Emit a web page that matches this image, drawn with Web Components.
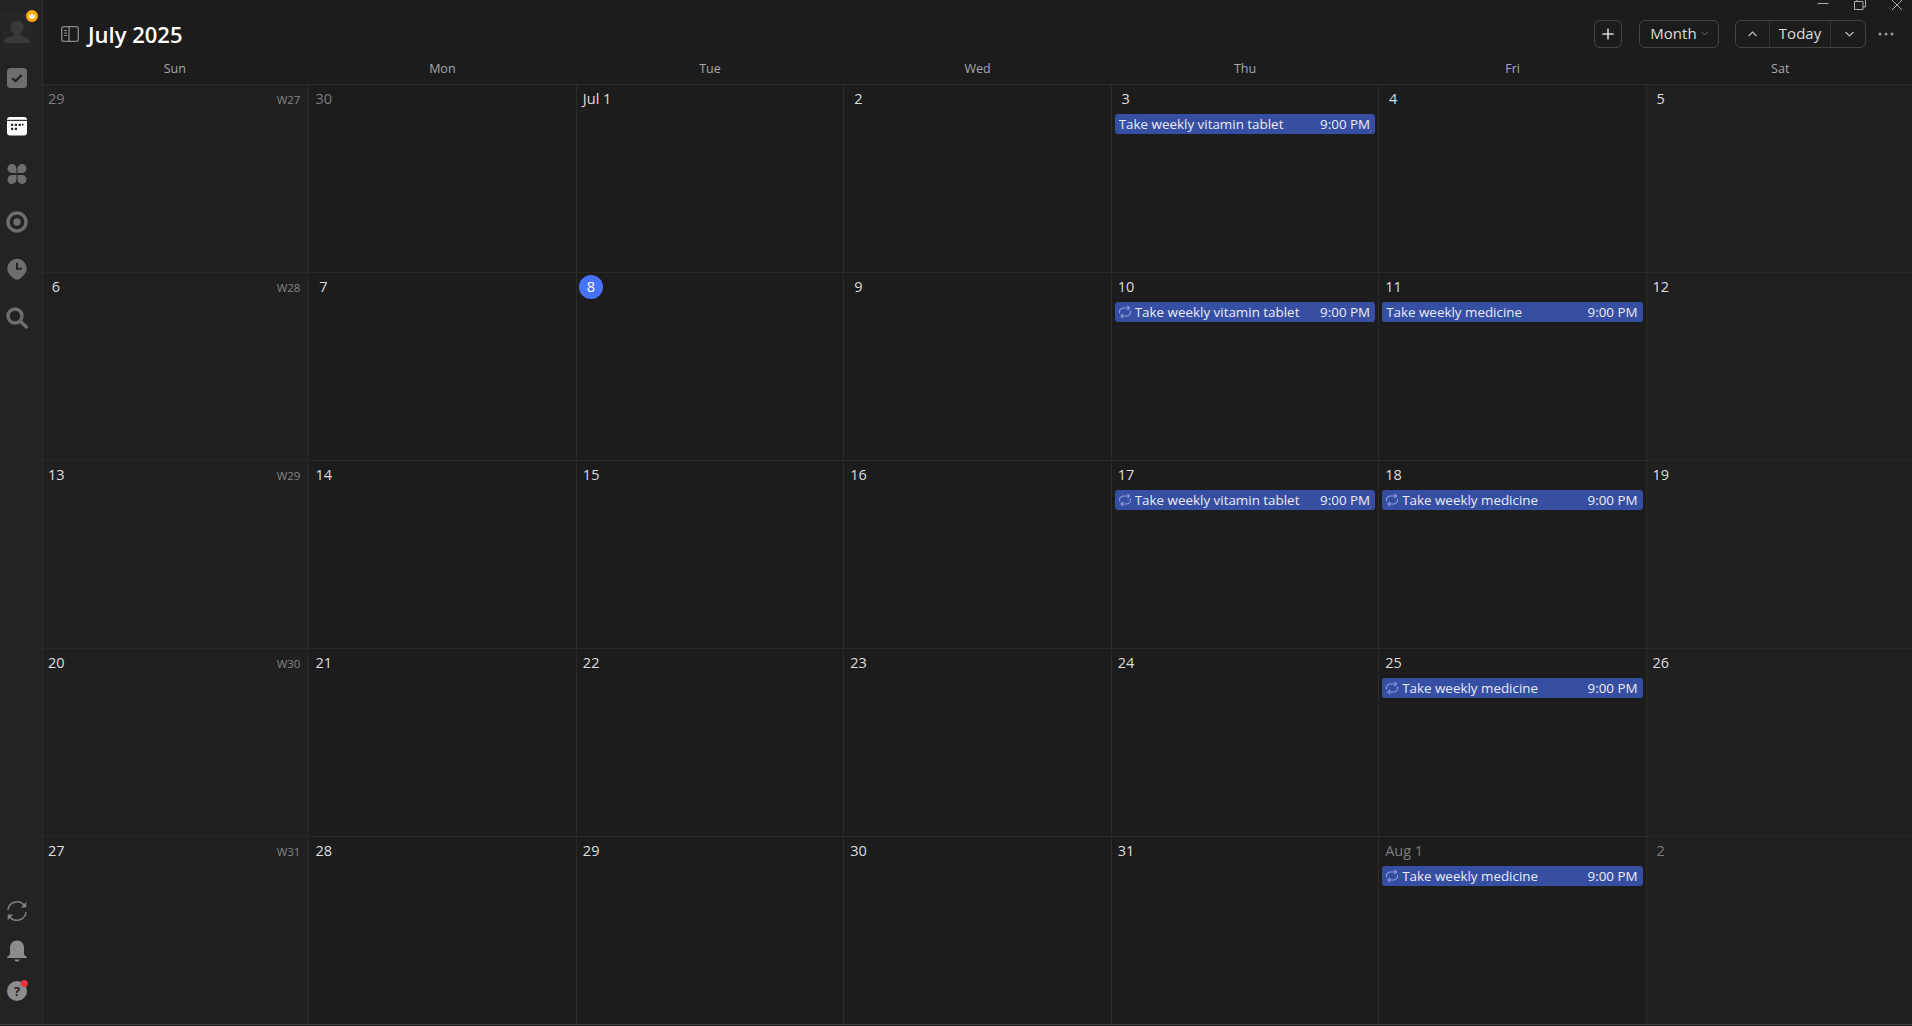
<!doctype html>
<html lang="en">
<head>
<meta charset="utf-8">
<title>Calendar</title>
<style>
  html, body { margin: 0; height: 100%; background: #1c1c1c; overflow: hidden; }
  body { font-family: "Open Sans", "Noto Sans", sans-serif; }
</style>
</head>
<body>
<cal-app>
  <side-bar slot="side">
    <nav-icon slot="top" size="48" name="check"></nav-icon>
    <nav-icon slot="top" size="48" name="calendar"></nav-icon>
    <nav-icon slot="top" size="48" name="grid"></nav-icon>
    <nav-icon slot="top" size="48" name="target"></nav-icon>
    <nav-icon slot="top" size="48" name="pin"></nav-icon>
    <nav-icon slot="top" size="48" name="search"></nav-icon>
    <nav-icon slot="bottom" size="40" name="sync"></nav-icon>
    <nav-icon slot="bottom" size="40" name="bell"></nav-icon>
    <nav-icon slot="bottom" size="40" name="help"></nav-icon>
  </side-bar>
  <cal-toolbar slot="main">July 2025</cal-toolbar>
  <month-grid slot="main">
    <day-cell date="29" muted week="W27"></day-cell>
    <day-cell date="30" muted></day-cell>
    <day-cell date="Jul 1"></day-cell>
    <day-cell date="2"></day-cell>
    <day-cell date="3"><cal-event time="9:00 PM">Take weekly vitamin tablet</cal-event></day-cell>
    <day-cell date="4"></day-cell>
    <day-cell date="5"></day-cell>

    <day-cell date="6" week="W28"></day-cell>
    <day-cell date="7"></day-cell>
    <day-cell date="8" today></day-cell>
    <day-cell date="9"></day-cell>
    <day-cell date="10"><cal-event time="9:00 PM" repeat>Take weekly vitamin tablet</cal-event></day-cell>
    <day-cell date="11"><cal-event time="9:00 PM">Take weekly medicine</cal-event></day-cell>
    <day-cell date="12"></day-cell>

    <day-cell date="13" week="W29"></day-cell>
    <day-cell date="14"></day-cell>
    <day-cell date="15"></day-cell>
    <day-cell date="16"></day-cell>
    <day-cell date="17"><cal-event time="9:00 PM" repeat>Take weekly vitamin tablet</cal-event></day-cell>
    <day-cell date="18"><cal-event time="9:00 PM" repeat>Take weekly medicine</cal-event></day-cell>
    <day-cell date="19"></day-cell>

    <day-cell date="20" week="W30"></day-cell>
    <day-cell date="21"></day-cell>
    <day-cell date="22"></day-cell>
    <day-cell date="23"></day-cell>
    <day-cell date="24"></day-cell>
    <day-cell date="25"><cal-event time="9:00 PM" repeat>Take weekly medicine</cal-event></day-cell>
    <day-cell date="26"></day-cell>

    <day-cell date="27" week="W31"></day-cell>
    <day-cell date="28"></day-cell>
    <day-cell date="29"></day-cell>
    <day-cell date="30"></day-cell>
    <day-cell date="31"></day-cell>
    <day-cell date="Aug 1" muted><cal-event time="9:00 PM" repeat>Take weekly medicine</cal-event></day-cell>
    <day-cell date="2" muted></day-cell>
  </month-grid>
</cal-app>

<script>
/* global HTMLElement, customElements */

const ICONS = {
  check: `<rect x="7" y="7" width="20" height="20" rx="3.5" fill="#6e6e6e"/>
    <path d="M12.200 17.200l3.300 3 6.200-6.200" fill="none" stroke="#232323" stroke-width="2.400"/>`,
  calendar: `<rect x="7" y="8" width="20" height="18.500" rx="3" fill="#fff"/>
    <rect x="7" y="10.800" width="20" height="1.100" fill="#232323"/>
    <path d="M11 14.700h2.200v2.200H11zM14.800 14.700H17v2.200h-2.200zM18.600 14.700h2.200v2.200h-2.200zM21.800 14.700H23.500v1.800h-1.700zM11 18.700h2.200v2.200H11zM14.800 18.700H17v2.200h-2.200z" fill="#232323"/>`,
  grid: `<path fill="#6e6e6e" d="M12 7a4.600 4.600 0 0 1 4.500 4.600v4.400h-4.500a4.500 4.500 0 0 1 0-9zM22 7a4.500 4.500 0 0 1 0 9h-4.500v-4.400A4.600 4.600 0 0 1 22 7zM12 27a4.500 4.500 0 0 1 0-9h4.500v4.400A4.600 4.600 0 0 1 12 27zM22 27a4.600 4.600 0 0 1-4.500-4.600V18H22a4.500 4.500 0 0 1 0 9z"/>`,
  target: `<circle cx="17" cy="17" r="9" fill="none" stroke="#6e6e6e" stroke-width="3.400"/>
    <circle cx="17" cy="17" r="3.700" fill="#6e6e6e"/>`,
  pin: `<path fill="#6e6e6e" d="M17 5.800a9.700 9.700 0 0 1 9.700 9.700c0 4.200-3.100 7.300-6.800 10.200-1.800 1.400-4 1.400-5.800 0-3.700-2.900-6.800-6-6.800-10.200A9.700 9.700 0 0 1 17 5.800z"/>
    <path d="M17 9.800v6h5" fill="none" stroke="#232323" stroke-width="2"/>`,
  search: `<circle cx="15" cy="15" r="7" fill="none" stroke="#6e6e6e" stroke-width="3.400"/>
    <path d="M20.500 20.500l6 5.400" fill="none" stroke="#6e6e6e" stroke-width="3.400" stroke-linecap="round"/>`,
  sync: `<path fill="none" stroke="#7f7f7f" stroke-width="1.500" d="M8 16a9.200 9.200 0 0 1 16-5.200l1.500 1.700M26 18a9.200 9.200 0 0 1-16 5.200l-1.500-1.700"/>
    <path fill="#7f7f7f" d="M26.300 7.800v5.700h-5.500zM7.700 26.200v-5.700h5.500z"/>`,
  bell: `<path fill="#8c8c8c" d="M17 6.500c-4.300 0-7 3.200-7 7.300v5.400c0 1.600-1 2.700-2.500 3.500-.7.400-.5 1.300.3 1.300h18.400c.8 0 1-.9.300-1.300-1.500-.8-2.500-1.900-2.500-3.500v-5.400c0-4.100-2.700-7.300-7-7.300z"/>
    <path fill="#8c8c8c" d="M14.500 25.500h5c-.4 1.400-1.300 2-2.500 2s-2.100-.6-2.500-2z"/>`,
  help: `<circle cx="17" cy="17" r="10" fill="#8c8c8c"/>
    <text x="17" y="21.600" text-anchor="middle" font-family="Open Sans, sans-serif" font-size="13" font-weight="700" fill="#232323">?</text>
    <circle cx="24.300" cy="9.500" r="3.500" fill="#f0333f"/>`,
};

class NavIcon extends HTMLElement {
  constructor() {
    super();
    this.attachShadow({ mode: "open" });
  }

  connectedCallback() {
    const size = this.getAttribute("size") || 48;
    this.shadowRoot.innerHTML = /* html */ `
    <style>
      :host { display: flex; height: ${size}px; align-items: center; }
      svg { display: block; width: 34px; height: 34px; }
    </style>
    <svg viewBox="0 0 34 34">${ICONS[this.getAttribute("name")]}</svg>`;
  }
}

class SideBar extends HTMLElement {
  constructor() {
    super();
    this.attachShadow({ mode: "open" }).innerHTML = /* html */ `
    <style>
      :host {
        display: flex;
        flex-direction: column;
        flex: none;
        width: 42px;
        height: 100%;
        box-sizing: border-box;
        background: #232323;
        padding-bottom: 13px;
      }
      .avatar { position: relative; height: 54px; }
      .avatar .shape { position: absolute; left: 1px; top: 13px; width: 32px; height: 35px; border-radius: 4px; background: #262626; }
      .avatar .user { position: absolute; left: 0; top: 18px; width: 34px; height: 29.400px; display: block; }
      .crown { position: absolute; left: 26px; top: 10px; width: 12px; height: 12px; }
      .top { flex: 1; }
    </style>
    <div class="avatar">
      <div class="shape"></div>
      <svg class="user" viewBox="0 0 34 34" preserveAspectRatio="none">
        <path fill="#3a3a3a" d="M17 3.500c4 0 6.600 3.100 6.600 7 0 3-1.300 5.500-3.200 6.900v2.100c0 1 .7 1.400 2.100 1.900 3.700 1.100 7 2.300 7.300 5.600.1 1.300-.4 1.900-1.700 1.900H6c-1.300 0-1.800-.6-1.700-1.900.3-3.300 3.600-4.500 7.300-5.600 1.400-.5 2.100-.9 2.100-1.900v-2.100c-1.900-1.400-3.200-3.900-3.200-6.900 0-3.900 2.600-7 6.500-7z"/>
      </svg>
      <svg class="crown" viewBox="0 0 12 12">
        <circle cx="6" cy="6" r="6" fill="#ffa90f"/>
        <path fill="#fff" d="M2.800 4.300l1.700 1.300L6 3.200l1.500 2.400 1.700-1.300-.5 4.200H3.300z"/>
      </svg>
    </div>
    <div class="top"><slot name="top"></slot></div>
    <div><slot name="bottom"></slot></div>`;
  }
}

class CalToolbar extends HTMLElement {
  constructor() {
    super();
    this.attachShadow({ mode: "open" }).innerHTML = /* html */ `
    <style>
      :host {
        display: flex;
        align-items: center;
        height: 28px;
        padding: 20px 18px 8px 19px;
        color: #fff;
        position: relative;
        box-shadow: inset 1px 0 #2b2b2b;
      }
      .toggle { width: 18px; height: 16px; margin-right: 9px; display: block; }
      .title { font-size: 22px; font-weight: 600; flex: 1; line-height: 28px; }
      .box {
        display: flex;
        align-items: center;
        height: 26px;
        border: 1px solid #444;
        border-radius: 6px;
        color: #dcdcdc;
        font-size: 15px;
      }
      .add { width: 26px; justify-content: center; margin-right: 17px; }
      .month { width: 78px; height: 24px; padding-bottom: 2px; justify-content: center; gap: 4px; margin-right: 16px; }
      .nav { width: 129px; margin-right: 12px; }
      .nav > span { display: flex; align-items: center; justify-content: center; height: 100%; }
      .nav .arrow { width: 33px; }
      .nav .arrow.next { padding-left: 3px; box-sizing: border-box; }
      .nav .today { width: 62px; box-sizing: border-box; padding-bottom: 2px; border-left: 1px solid #333; border-right: 1px solid #333; }
      .more { width: 16px; height: 4px; display: block; }
      .winbtns { position: absolute; top: 0; right: 9px; display: flex; gap: 25px; }
      .winbtns svg { display: block; width: 12px; height: 10px; }
    </style>
    <svg class="toggle" viewBox="0 0 18 16" fill="none" stroke="#8a8a8a" stroke-width="1.300">
      <rect x=".7" y=".7" width="16.600" height="14.600" rx="2"/>
      <path d="M8 .7v14.600"/>
      <path d="M3 4.500h3M3 7h3M3 9.500h3" stroke-width="1"/>
    </svg>
    <span class="title"><slot></slot></span>
    <span class="box add">
      <svg width="12" height="12" viewBox="0 0 12 12"><path d="M6 .5v11M.5 6h11" stroke="#d8d8d8" stroke-width="1.500"/></svg>
    </span>
    <span class="box month">Month
      <svg width="7" height="5" viewBox="0 0 7 5"><path d="M.5 1l3 3 3-3" fill="none" stroke="#666" stroke-width="1"/></svg>
    </span>
    <span class="box nav">
      <span class="arrow"><svg width="9" height="6" viewBox="0 0 9 6"><path d="M.5 5l4-4 4 4" fill="none" stroke="#bbb" stroke-width="1.200"/></svg></span>
      <span class="today">Today</span>
      <span class="arrow next"><svg width="9" height="6" viewBox="0 0 9 6"><path d="M.5 1l4 4 4-4" fill="none" stroke="#bbb" stroke-width="1.200"/></svg></span>
    </span>
    <svg class="more" viewBox="0 0 16 4" fill="#9a9a9a"><circle cx="2" cy="2" r="1.500"/><circle cx="8" cy="2" r="1.500"/><circle cx="14" cy="2" r="1.500"/></svg>
    <div class="winbtns">
      <svg viewBox="0 0 12 10"><path d="M.5 3.500h11" stroke="#aaa"/></svg>
      <svg viewBox="0 0 12 10" fill="none" stroke="#aaa"><path d="M.5 1.500H9v8H.5z"/><path d="M3 1.500V-1h8.500v8H9"/></svg>
      <svg viewBox="0 0 12 10" fill="none" stroke="#aaa"><path d="M.5-.5l11 11M11.500-.5l-11 11"/></svg>
    </div>`;
  }
}

const WEEKDAYS = ["Sun", "Mon", "Tue", "Wed", "Thu", "Fri", "Sat"];

class MonthGrid extends HTMLElement {
  constructor() {
    super();
    const heads = WEEKDAYS.map((day) => `<span>${day}</span>`).join("");
    this.attachShadow({ mode: "open" }).innerHTML = /* html */ `
    <style>
      :host { display: flex; flex-direction: column; flex: 1; min-height: 0; box-shadow: inset 1px 0 #2b2b2b; }
      .heads {
        display: grid;
        grid-template-columns: repeat(7, 1fr);
        height: 28px;
        width: calc(100% + 3px);
        margin-left: -1px;
        color: #a8a8a8;
        font-size: 12.5px;
        line-height: 26px;
        text-align: center;
      }
      .cells {
        flex: 1;
        min-height: 0;
        width: calc(100% + 2px);
        margin-left: -1px;
        display: grid;
        grid-template-columns: repeat(7, 1fr);
        grid-template-rows: repeat(5, 1fr);
      }
    </style>
    <div class="heads">${heads}</div>
    <div class="cells"><slot></slot></div>`;
  }
}

class DayCell extends HTMLElement {
  constructor() {
    super();
    this.attachShadow({ mode: "open" });
  }

  connectedCallback() {
    const week = this.getAttribute("week");
    this.shadowRoot.innerHTML = /* html */ `
    <style>
      :host {
        display: block;
        box-sizing: border-box;
        min-width: 0;
        border-top: 1px solid #292929;
        border-left: 1px solid #292929;
        padding: 2px 3px 0 3px;
        color: #dedede;
      }
      :host(:nth-child(7n+1)), :host(:nth-child(7n)) { background: #202020; }
      :host(:nth-child(7n+1)) { border-left-color: #232323; box-shadow: inset 1px 0 #292929; }
      :host([muted]) { color: #7d7d7d; }
      .head { display: flex; justify-content: space-between; align-items: center; height: 24px; margin: 0 0 3px -1px; }
      .date {
        min-width: 24px;
        height: 24px;
        box-sizing: border-box;
        padding: 0 4px;
        text-align: center;
        font-size: 14.5px;
        line-height: 24px;
        border-radius: 12px;
      }
      :host([today]) .date { background: #4772fa; color: #fff; }
      .week { font-size: 11.5px; color: #858585; margin-right: 5px; }
    </style>
    <div class="head">
      <span class="date">${this.getAttribute("date")}</span>
      ${week ? `<span class="week">${week}</span>` : ""}
    </div>
    <slot></slot>`;
  }
}

class CalEvent extends HTMLElement {
  constructor() {
    super();
    this.attachShadow({ mode: "open" });
  }

  connectedCallback() {
    const icon = this.hasAttribute("repeat")
      ? `<svg viewBox="0 0 14 14" fill="none" stroke="#8e9fdc" stroke-width="1.100">
          <path d="M1.500 8.200V7a4 4 0 0 1 4-4h5.500M12.500 5.800V7a4 4 0 0 1-4 4H4"/>
          <path d="M9.500 1l2 2-2 2M5 9l-2 2 2 2"/>
        </svg>`
      : "";
    this.shadowRoot.innerHTML = /* html */ `
    <style>
      :host {
        display: flex;
        align-items: center;
        height: 20px;
        padding: 0 5px 0 4px;
        border-radius: 3px;
        background: #364fa3;
        color: #eaecf6;
        font-size: 13.4px;
        white-space: nowrap;
      }
      svg { width: 14px; height: 14px; margin: 0 3px 0 -1px; flex: none; }
      .title { flex: 1; overflow: hidden; }
    </style>
    ${icon}<span class="title"><slot></slot></span><span>${this.getAttribute("time")}</span>`;
  }
}

class CalApp extends HTMLElement {
  constructor() {
    super();
    this.attachShadow({ mode: "open" }).innerHTML = /* html */ `
    <style>
      :host {
        display: flex;
        height: 1025px;
        box-sizing: border-box;
        border-bottom: 1px solid #444;
        background: #1c1c1c;
      }
      .main { flex: 1; min-width: 0; display: flex; flex-direction: column; }
    </style>
    <slot name="side"></slot>
    <div class="main"><slot name="main"></slot></div>`;
  }
}

customElements.define("nav-icon", NavIcon);
customElements.define("side-bar", SideBar);
customElements.define("cal-toolbar", CalToolbar);
customElements.define("month-grid", MonthGrid);
customElements.define("day-cell", DayCell);
customElements.define("cal-event", CalEvent);
customElements.define("cal-app", CalApp);
</script>
</body>
</html>
